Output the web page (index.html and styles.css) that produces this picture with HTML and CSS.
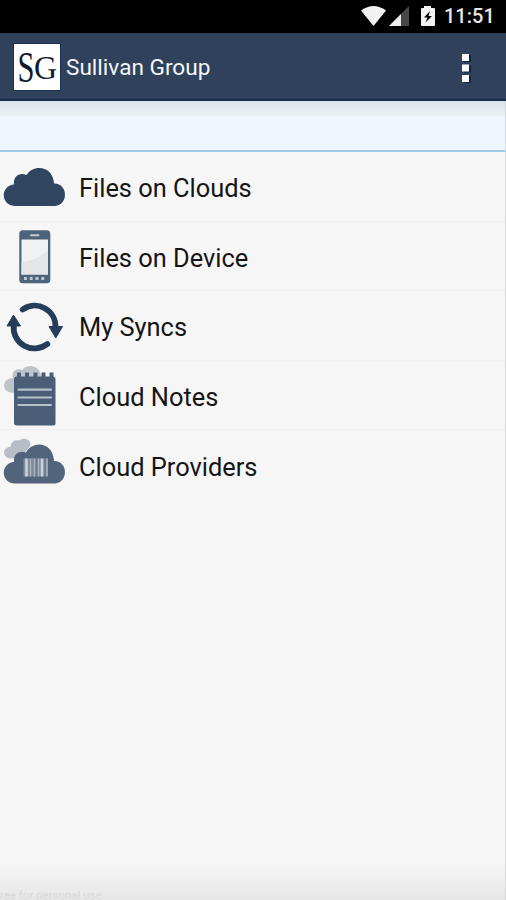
FILE: index.html
```html
<!DOCTYPE html>
<html lang="en">
<head>
<meta charset="utf-8">
<title>Sullivan Group</title>
<link rel="stylesheet" href="styles.css">
</head>
<body>
<div class="screen">
  <div class="status">
    <svg class="status-icons" width="80" height="33" viewBox="0 0 80 33">
      <path d="M0 10.500Q12.500 1.500 25 10.500L12.500 26Z" fill="#f2f2f2"/>
      <path d="M48 6V26H28Z" fill="#484848"/>
      <path d="M40 14V26H28Z" fill="#ececec"/>
      <path d="M63 8V6H70V8H73Q74 8 74 9V25Q74 26 73 26H61Q60 26 60 25V9Q60 8 61 8Z" fill="#f2f2f2"/>
      <path d="M69 11L63 17.500H66.500L64.500 22.500L71 16H67.500Z" fill="#000"/>
    </svg>
    <span class="clock">11:51</span>
  </div>
  <header class="bar">
    <svg class="logo" width="46" height="46" viewBox="0 0 46 46">
      <rect width="46" height="46" fill="#fff"/>
      <text class="logo-letter" x="3.500" y="37.500" font-size="44" textLength="17" lengthAdjust="spacingAndGlyphs">S</text>
      <text class="logo-letter" x="20" y="35" font-size="33" textLength="23" lengthAdjust="spacingAndGlyphs">G</text>
    </svg>
    <h1 class="title">Sullivan Group</h1>
    <svg class="more" width="10" height="30" viewBox="0 0 10 30">
      <path d="M3 2H10V9H3ZM3 12.500H10V19.500H3ZM3 23H10V30H3Z" fill="#102540"/>
      <path d="M1 1H8V8H1ZM1 11.500H8V18.500H1ZM1 22H8V29H1Z" fill="#fff"/>
    </svg>
  </header>
  <div class="band"></div>
  <ul class="menu">
    <li class="row">
      <svg class="icon" width="70" height="69" viewBox="0 0 70 69">
        <path d="M15 54A10.500 10.500 0 0 1 14 32.500C13 24 20 20 26.500 23C33 12 53 13 54 31.500C68 31 69 53 55 54Z" fill="#30455f"/>
      </svg>
      <span class="label">Files on Clouds</span>
    </li>
    <li class="row">
      <svg class="icon" width="70" height="69" viewBox="0 0 70 69">
        <rect x="19.300" y="9.300" width="31" height="53" rx="3.500" fill="#4d627b"/>
        <rect x="21.500" y="18.500" width="26.500" height="35" fill="#eff1f2"/>
        <path d="M21.500 41.500Q36 39.500 48 29.500V53.500H21.500Z" fill="#e3e5e7"/>
        <path d="M31 14.200H38.500" stroke="#c2ccd6" stroke-width="2" stroke-linecap="round"/>
        <path d="M24 57.500H27M29.700 57.500H32.700M35.500 57.500H38.500M41.300 57.500H44.300" stroke="#bdc6d0" stroke-width="3"/>
      </svg>
      <span class="label">Files on Device</span>
    </li>
    <li class="row">
      <svg class="icon" width="70" height="69" viewBox="0 0 70 69">
        <path d="M22.700 18.500A20.800 20.800 0 0 1 55.500 36.500" fill="none" stroke="#243d5a" stroke-width="5.800" stroke-linecap="round"/>
        <path d="M47.300 53A20.800 20.800 0 0 1 13.800 34" fill="none" stroke="#243d5a" stroke-width="5.800" stroke-linecap="round"/>
        <path d="M49 35.500H62.500L55.800 47ZM7 35L13.500 24L20.500 35Z" fill="#243d5a" stroke="#243d5a" stroke-width="1" stroke-linejoin="round"/>
      </svg>
      <span class="label">My Syncs</span>
    </li>
    <li class="row">
      <svg class="icon" width="70" height="69" viewBox="0 0 70 69">
        <path d="M14 33C1 33 1 18 13 18C11 10 18 8 22 10C27 3 41 5 41 17V33Z" fill="#bdc4ca"/>
        <path d="M14 19Q14 16 17 16.500V12.500H21V16.500H25V12.500H29V16.500H33.500V12.500H37.500V16.500H41.500V12.500H45.500V16.500H49.500V12.500H53.500V16.500Q55.500 17 55.500 19V63Q55.500 65.500 53 65.500H17Q14 65.500 14 63Z" fill="#4b5e77"/>
        <path d="M18.500 29.700H51M18.500 37.500H51M18.500 45H51" stroke="#b5c1cd" stroke-width="2.200" stroke-linecap="round"/>
      </svg>
      <span class="label">Cloud Notes</span>
    </li>
    <li class="row">
      <svg class="icon" width="70" height="69" viewBox="0 0 70 69">
        <path d="M10 28.500C2 27.500 2 17.500 11 16.500C11 10.500 16 9.500 19 10.500C24 6.500 31 9.500 30.500 15.500L20 28.500Z" fill="#b7bec6"/>
        <path d="M15 53.500A10.500 10.500 0 0 1 14 32C13 23 20 20 26 22.500C33 10 53 12 54 31C68 30.500 69 52.500 55 53.500Z" fill="#52647b"/>
        <rect x="23.500" y="28.500" width="24.500" height="18" fill="#7f8d9e"/>
        <path d="M26.500 28.500V46.500M42 28.500V46.500" stroke="#ccd3da" stroke-width="2.500"/>
        <path d="M30.500 28.500V46.500M34.500 28.500V46.500M38.500 28.500V46.500M47 28.500V46.500" stroke="#aab4bf" stroke-width="1.300"/>
        <path d="M45 28.500V46.500M36.500 28.500V46.500" stroke="#65768a" stroke-width="1.200"/>
      </svg>
      <span class="label">Cloud Providers</span>
    </li>
  </ul>
  <footer class="foot">ree for personal use</footer>
</div>
</body>
</html>
```
FILE: styles.css
```css
* { box-sizing: border-box; }
body { margin: 0; background: #f6f6f6; font-family: Roboto, "Liberation Sans", sans-serif; }
.screen {
  width: 506px;
  height: 900px;
  display: flex;
  flex-direction: column;
  overflow: hidden;
  background: #f6f6f6;
}
.status {
  height: 33px;
  flex: none;
  display: flex;
  justify-content: flex-end;
  align-items: center;
  padding-right: 12px;
  background: #000;
}
.status-icons { margin-right: 3px; }
.clock {
  width: 50px;
  font-size: 20px;
  line-height: 33px;
  font-weight: 500;
  color: #e6e6e6;
  white-space: nowrap;
  text-align: right;
}
.bar {
  height: 68px;
  flex: none;
  display: flex;
  align-items: center;
  padding: 2px 35px 0 14px;
  background: #30425b;
  border-bottom: 2px solid #142e4d;
}
.logo { flex: none; outline: 1px solid #1b2f50; }
.logo-letter { font-family: "Liberation Serif", serif; fill: #101a30; }
.title {
  flex: 1;
  margin: 2px 0 0 6px;
  font-size: 22.6px;
  line-height: 30px;
  font-weight: 400;
  color: #f4f6fa;
}
.more { flex: none; margin-top: 1px; }
.band {
  height: 51px;
  flex: none;
  background: linear-gradient(#d9e2e6 0, #e5edf0 9px, #e9f1f5 15px, #eef7ff 16px);
  border-bottom: 2px solid #a0cbe7;
  border-right: 1px solid #d3dadd;
}
.menu {
  flex: none;
  margin: 0;
  padding: 0;
  list-style: none;
  border-right: 1px solid #d8d8d8;
}
.row {
  height: 69.5px;
  display: flex;
  align-items: center;
  border-bottom: 1px solid #f0f0f0;
}
.row:last-child { border-bottom: 0; }
.icon { flex: none; }
.label {
  margin: 4px 0 0 9px;
  font-size: 25.4px;
  line-height: 34px;
  color: #151515;
  white-space: nowrap;
}
.foot {
  flex: 1;
  display: flex;
  align-items: flex-end;
  font-size: 11.5px;
  line-height: 10px;
  color: #d9d9d9;
  background: linear-gradient(transparent calc(100% - 36px), #e6e6e6);
  border-right: 1px solid #d8d8d8;
}
```
